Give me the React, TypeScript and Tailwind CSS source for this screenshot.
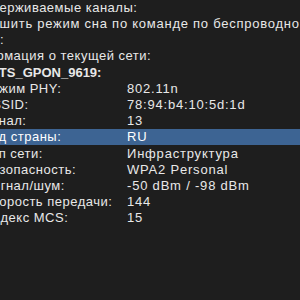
import React from 'react';

type Row = {
  label: string;
  value?: string;
  indent: string;
  bold?: boolean;
  active?: boolean;
  tail?: boolean;
};

const rows: Row[] = [
  { label: 'Поддерживаемые каналы:', indent: 'ml-[-34px] tracking-[0.5px]' },
  { label: 'Разрешить режим сна по команде по беспроводной сети', indent: 'ml-[-40px] tracking-[0.75px]' },
  { label: 'Поддержка AirDrop:', indent: '', tail: true },
  { label: 'Информация о текущей сети:', indent: 'ml-[-40px] tracking-[0.5px]' },
  { label: 'MTS_GPON_9619:', indent: 'ml-[-12px] font-bold', bold: true },
  { label: 'Режим PHY:', value: '802.11n', indent: 'ml-[-17px]' },
  { label: 'BSSID:', value: '78:94:b4:10:5d:1d', indent: 'ml-[-17px]' },
  { label: 'Канал:', value: '13', indent: 'ml-[-17px]' },
  { label: 'Код страны:', value: 'RU', indent: 'ml-[-17px]', active: true },
  { label: 'Тип сети:', value: 'Инфраструктура', indent: 'ml-[-17px]' },
  { label: 'Безопасность:', value: 'WPA2 Personal', indent: 'ml-[-17px]' },
  { label: 'Сигнал/шум:', value: '-50 dBm / -98 dBm', indent: 'ml-[-17px]' },
  { label: 'Скорость передачи:', value: '144', indent: 'ml-[-17px]' },
  { label: 'Индекс MCS:', value: '15', indent: 'ml-[-17px]' },
];

export default function App() {
  return (
    <div className="w-[300px] h-[300px] overflow-hidden bg-[#1e1e1e] text-[#e8e8e8] text-[13px] font-['Liberation_Sans',sans-serif]">
      <div className="mt-[-0.5px]">
        {rows.map((row, i) => (
          <div
            key={i}
            className={`flex h-[16.2px] items-center whitespace-nowrap ${
              row.active ? 'bg-[#3d6493] text-white' : ''
            }`}
          >
            {row.value !== undefined ? (
              <>
                <div className="w-[127px] shrink-0 tracking-[0.5px]">
                  <div className={row.indent}>{row.label}</div>
                </div>
                <div className="tracking-[0.8px]">{row.value}</div>
              </>
            ) : row.tail ? (
              <div className="ml-[-200px] w-[204px] shrink-0 text-right tracking-[0.5px]">{row.label}</div>
            ) : (
              <div className={row.indent}>{row.label}</div>
            )}
          </div>
        ))}
      </div>
    </div>
  );
}
